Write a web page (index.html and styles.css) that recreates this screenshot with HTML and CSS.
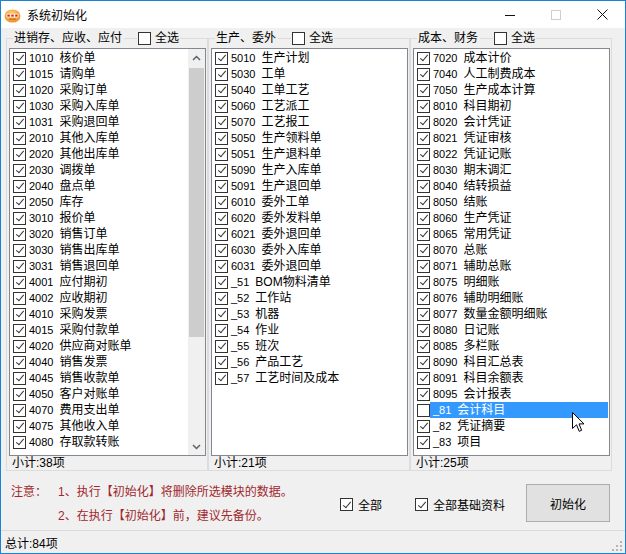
FILE: index.html
```html
<!DOCTYPE html>
<html lang="zh">
<head>
<meta charset="utf-8">
<title>系统初始化</title>
<link rel="stylesheet" href="styles.css">
</head>
<body>
<div class="window">
  <div class="titlebar">
    <svg class="app-icon" width="17" height="14" viewBox="0 0 17 14">
      <defs>
        <radialGradient id="ig" cx="0.45" cy="0.35" r="0.7">
          <stop offset="0" stop-color="#ffd27a"/>
          <stop offset="1" stop-color="#ee8a1c"/>
        </radialGradient>
      </defs>
      <ellipse cx="8.5" cy="7" rx="8" ry="6.6" fill="url(#ig)"/>
      <rect x="2.5" y="4.8" width="12" height="3.6" rx="1" fill="#fff3dc"/>
      <rect x="3.4" y="5.6" width="2.4" height="2" fill="#d2232a"/>
      <rect x="7.3" y="5.6" width="2.4" height="2" fill="#d2232a"/>
      <rect x="11.2" y="5.6" width="2.4" height="2" fill="#d2232a"/>
      <rect x="5" y="9.6" width="7" height="1" fill="#b8601a"/>
    </svg>
    <span class="title">系统初始化</span>
    <div class="caption">
      <span class="cap"><svg width="10" height="10" viewBox="0 0 10 10"><path d="M0 5.5H10" stroke="#111" stroke-width="1"/></svg></span>
      <span class="cap"><svg width="10" height="10" viewBox="0 0 10 10"><rect x="0.5" y="0.5" width="9" height="9" fill="none" stroke="#cfcfcf"/></svg></span>
      <span class="cap"><svg width="11" height="11" viewBox="0 0 11 11"><path d="M0.5 0.5L10.5 10.5M10.5 0.5L0.5 10.5" stroke="#111" stroke-width="1"/></svg></span>
    </div>
  </div>

  <div class="groups">
    <fieldset class="group">
      <legend><span class="legend-inner"><span class="legend-text">进销存、应收、应付</span><span class="legend-line"></span><span class="cb"></span><span class="legend-chk">全选</span></span></legend>
      <div class="list">
        <div class="items">
          <div class="item"><span class="cb on"></span><span class="lbl"><span class="code">1010</span>核价单</span></div>
          <div class="item"><span class="cb on"></span><span class="lbl"><span class="code">1015</span>请购单</span></div>
          <div class="item"><span class="cb on"></span><span class="lbl"><span class="code">1020</span>采购订单</span></div>
          <div class="item"><span class="cb on"></span><span class="lbl"><span class="code">1030</span>采购入库单</span></div>
          <div class="item"><span class="cb on"></span><span class="lbl"><span class="code">1031</span>采购退回单</span></div>
          <div class="item"><span class="cb on"></span><span class="lbl"><span class="code">2010</span>其他入库单</span></div>
          <div class="item"><span class="cb on"></span><span class="lbl"><span class="code">2020</span>其他出库单</span></div>
          <div class="item"><span class="cb on"></span><span class="lbl"><span class="code">2030</span>调拨单</span></div>
          <div class="item"><span class="cb on"></span><span class="lbl"><span class="code">2040</span>盘点单</span></div>
          <div class="item"><span class="cb on"></span><span class="lbl"><span class="code">2050</span>库存</span></div>
          <div class="item"><span class="cb on"></span><span class="lbl"><span class="code">3010</span>报价单</span></div>
          <div class="item"><span class="cb on"></span><span class="lbl"><span class="code">3020</span>销售订单</span></div>
          <div class="item"><span class="cb on"></span><span class="lbl"><span class="code">3030</span>销售出库单</span></div>
          <div class="item"><span class="cb on"></span><span class="lbl"><span class="code">3031</span>销售退回单</span></div>
          <div class="item"><span class="cb on"></span><span class="lbl"><span class="code">4001</span>应付期初</span></div>
          <div class="item"><span class="cb on"></span><span class="lbl"><span class="code">4002</span>应收期初</span></div>
          <div class="item"><span class="cb on"></span><span class="lbl"><span class="code">4010</span>采购发票</span></div>
          <div class="item"><span class="cb on"></span><span class="lbl"><span class="code">4015</span>采购付款单</span></div>
          <div class="item"><span class="cb on"></span><span class="lbl"><span class="code">4020</span>供应商对账单</span></div>
          <div class="item"><span class="cb on"></span><span class="lbl"><span class="code">4040</span>销售发票</span></div>
          <div class="item"><span class="cb on"></span><span class="lbl"><span class="code">4045</span>销售收款单</span></div>
          <div class="item"><span class="cb on"></span><span class="lbl"><span class="code">4050</span>客户对账单</span></div>
          <div class="item"><span class="cb on"></span><span class="lbl"><span class="code">4070</span>费用支出单</span></div>
          <div class="item"><span class="cb on"></span><span class="lbl"><span class="code">4075</span>其他收入单</span></div>
          <div class="item"><span class="cb on"></span><span class="lbl"><span class="code">4080</span>存取款转账</span></div>
        </div>
        <div class="vscroll">
          <div class="arrow"><svg width="9" height="6" viewBox="0 0 9 6"><path d="M1 5L4.5 1.5L8 5" fill="none" stroke="#606060" stroke-width="1.5"/></svg></div>
          <div class="track"><div class="thumb"></div></div>
          <div class="arrow"><svg width="9" height="6" viewBox="0 0 9 6"><path d="M1 1L4.5 4.5L8 1" fill="none" stroke="#606060" stroke-width="1.5"/></svg></div>
        </div>
      </div>
      <div class="subtotal">小计:38项</div>
    </fieldset>

    <fieldset class="group">
      <legend><span class="legend-inner"><span class="legend-text">生产、委外</span><span class="legend-line"></span><span class="cb"></span><span class="legend-chk">全选</span></span></legend>
      <div class="list">
        <div class="items">
          <div class="item"><span class="cb on"></span><span class="lbl"><span class="code">5010</span>生产计划</span></div>
          <div class="item"><span class="cb on"></span><span class="lbl"><span class="code">5030</span>工单</span></div>
          <div class="item"><span class="cb on"></span><span class="lbl"><span class="code">5040</span>工单工艺</span></div>
          <div class="item"><span class="cb on"></span><span class="lbl"><span class="code">5060</span>工艺派工</span></div>
          <div class="item"><span class="cb on"></span><span class="lbl"><span class="code">5070</span>工艺报工</span></div>
          <div class="item"><span class="cb on"></span><span class="lbl"><span class="code">5050</span>生产领料单</span></div>
          <div class="item"><span class="cb on"></span><span class="lbl"><span class="code">5051</span>生产退料单</span></div>
          <div class="item"><span class="cb on"></span><span class="lbl"><span class="code">5090</span>生产入库单</span></div>
          <div class="item"><span class="cb on"></span><span class="lbl"><span class="code">5091</span>生产退回单</span></div>
          <div class="item"><span class="cb on"></span><span class="lbl"><span class="code">6010</span>委外工单</span></div>
          <div class="item"><span class="cb on"></span><span class="lbl"><span class="code">6020</span>委外发料单</span></div>
          <div class="item"><span class="cb on"></span><span class="lbl"><span class="code">6021</span>委外退回单</span></div>
          <div class="item"><span class="cb on"></span><span class="lbl"><span class="code">6030</span>委外入库单</span></div>
          <div class="item"><span class="cb on"></span><span class="lbl"><span class="code">6031</span>委外退回单</span></div>
          <div class="item"><span class="cb on"></span><span class="lbl"><span class="code">_51</span>BOM物料清单</span></div>
          <div class="item"><span class="cb on"></span><span class="lbl"><span class="code">_52</span>工作站</span></div>
          <div class="item"><span class="cb on"></span><span class="lbl"><span class="code">_53</span>机器</span></div>
          <div class="item"><span class="cb on"></span><span class="lbl"><span class="code">_54</span>作业</span></div>
          <div class="item"><span class="cb on"></span><span class="lbl"><span class="code">_55</span>班次</span></div>
          <div class="item"><span class="cb on"></span><span class="lbl"><span class="code">_56</span>产品工艺</span></div>
          <div class="item"><span class="cb on"></span><span class="lbl"><span class="code">_57</span>工艺时间及成本</span></div>
        </div>
      </div>
      <div class="subtotal">小计:21项</div>
    </fieldset>

    <fieldset class="group">
      <legend><span class="legend-inner"><span class="legend-text">成本、财务</span><span class="legend-line"></span><span class="cb"></span><span class="legend-chk">全选</span></span></legend>
      <div class="list">
        <div class="items">
          <div class="item"><span class="cb on"></span><span class="lbl"><span class="code">7020</span>成本计价</span></div>
          <div class="item"><span class="cb on"></span><span class="lbl"><span class="code">7040</span>人工制费成本</span></div>
          <div class="item"><span class="cb on"></span><span class="lbl"><span class="code">7050</span>生产成本计算</span></div>
          <div class="item"><span class="cb on"></span><span class="lbl"><span class="code">8010</span>科目期初</span></div>
          <div class="item"><span class="cb on"></span><span class="lbl"><span class="code">8020</span>会计凭证</span></div>
          <div class="item"><span class="cb on"></span><span class="lbl"><span class="code">8021</span>凭证审核</span></div>
          <div class="item"><span class="cb on"></span><span class="lbl"><span class="code">8022</span>凭证记账</span></div>
          <div class="item"><span class="cb on"></span><span class="lbl"><span class="code">8030</span>期末调汇</span></div>
          <div class="item"><span class="cb on"></span><span class="lbl"><span class="code">8040</span>结转损益</span></div>
          <div class="item"><span class="cb on"></span><span class="lbl"><span class="code">8050</span>结账</span></div>
          <div class="item"><span class="cb on"></span><span class="lbl"><span class="code">8060</span>生产凭证</span></div>
          <div class="item"><span class="cb on"></span><span class="lbl"><span class="code">8065</span>常用凭证</span></div>
          <div class="item"><span class="cb on"></span><span class="lbl"><span class="code">8070</span>总账</span></div>
          <div class="item"><span class="cb on"></span><span class="lbl"><span class="code">8071</span>辅助总账</span></div>
          <div class="item"><span class="cb on"></span><span class="lbl"><span class="code">8075</span>明细账</span></div>
          <div class="item"><span class="cb on"></span><span class="lbl"><span class="code">8076</span>辅助明细账</span></div>
          <div class="item"><span class="cb on"></span><span class="lbl"><span class="code">8077</span>数量金额明细账</span></div>
          <div class="item"><span class="cb on"></span><span class="lbl"><span class="code">8080</span>日记账</span></div>
          <div class="item"><span class="cb on"></span><span class="lbl"><span class="code">8085</span>多栏账</span></div>
          <div class="item"><span class="cb on"></span><span class="lbl"><span class="code">8090</span>科目汇总表</span></div>
          <div class="item"><span class="cb on"></span><span class="lbl"><span class="code">8091</span>科目余额表</span></div>
          <div class="item"><span class="cb on"></span><span class="lbl"><span class="code">8095</span>会计报表</span></div>
          <div class="item"><span class="cb"></span><span class="lbl selected"><span class="code">_81</span>会计科目</span></div>
          <div class="item"><span class="cb on"></span><span class="lbl"><span class="code">_82</span>凭证摘要</span></div>
          <div class="item"><span class="cb on"></span><span class="lbl"><span class="code">_83</span>项目</span></div>
        </div>
      </div>
      <div class="subtotal">小计:25项</div>
    </fieldset>
  </div>

  <div class="bottom">
    <div class="notes">
      <span>注意：</span><span>1、执行【初始化】将删除所选模块的数据。</span>
      <span></span><span>2、在执行【初始化】前，建议先备份。</span>
    </div>
    <div class="options">
      <span class="opt"><span class="cb on"></span>全部</span>
      <span class="opt"><span class="cb on"></span>全部基础资料</span>
      <span class="btn">初始化</span>
    </div>
  </div>

  <div class="status">
    <span>总计:84项</span>
    <svg class="grip" width="11" height="11" viewBox="0 0 11 11">
      <rect x="8" y="0" width="2" height="2" fill="#b5b5b5"/>
      <rect x="4" y="4" width="2" height="2" fill="#b5b5b5"/>
      <rect x="8" y="4" width="2" height="2" fill="#b5b5b5"/>
      <rect x="0" y="8" width="2" height="2" fill="#b5b5b5"/>
      <rect x="4" y="8" width="2" height="2" fill="#b5b5b5"/>
      <rect x="8" y="8" width="2" height="2" fill="#b5b5b5"/>
    </svg>
  </div>

  <svg class="cursor" width="13" height="21" viewBox="0 0 13 21">
    <path d="M0.5 0.5V16.5L4.5 12.8L7.2 19.3L9.6 18.3L7 11.9H12Z" fill="#fff" stroke="#000" stroke-width="1" stroke-linejoin="round"/>
  </svg>
</div>
</body>
</html>
```

FILE: styles.css
```css
body {
  margin: 0;
  background: #fff;
  font-family: "Liberation Sans", "Noto Sans CJK SC", sans-serif;
  font-size: 12px;
  color: #000;
}

.window {
  width: 626px;
  height: 554px;
  box-sizing: border-box;
  border: 1px solid #1883d7;
  background: #f0f0f0;
  display: flex;
  flex-direction: column;
  position: relative;
  overflow: hidden;
}

/* title bar */
.titlebar {
  height: 27px;
  flex: none;
  background: #fff;
  display: flex;
  align-items: center;
}
.app-icon {
  margin-left: 3px;
  margin-right: 6px;
  margin-top: 2px;
  flex: none;
}
.title {
  line-height: 16px;
  margin-top: 2px;
}
.caption {
  margin-left: auto;
  align-self: stretch;
  display: flex;
}
.cap {
  width: 46px;
  display: flex;
  align-items: center;
  justify-content: center;
}

/* groups */
.groups {
  height: 443px;
  flex: none;
  box-sizing: border-box;
  padding: 2px 0 0 5px;
  display: flex;
  align-items: flex-start;
}
.group {
  width: 202px;
  box-sizing: border-box;
  margin: 0;
  padding: 0 1px 0 2px;
  border: 1px solid #dcdcdc;
  min-width: 0;
}
.group legend {
  margin-left: 4px;
  padding: 0 1px;
  height: 16px;
  line-height: 16px;
}
.legend-inner {
  display: flex;
  align-items: center;
  height: 16px;
  white-space: nowrap;
}
.legend-line {
  width: 13px;
  height: 1px;
  background: #dcdcdc;
  margin: 1px 1px 0 2px;
  flex: none;
}
.legend-chk {
  margin-left: 4px;
}

.cb {
  width: 13px;
  height: 13px;
  box-sizing: border-box;
  border: 1px solid #333;
  background: #fff;
  position: relative;
  flex: none;
  display: inline-block;
}
.cb.on::after {
  content: "";
  position: absolute;
  left: 3.5px;
  top: 0.5px;
  width: 3px;
  height: 7px;
  border: solid #333;
  border-width: 0 1.2px 1.2px 0;
  transform: rotate(40deg);
}

.list {
  margin-top: 2px;
  height: 408px;
  box-sizing: border-box;
  border: 1px solid #828790;
  background: #fff;
  display: flex;
  overflow: hidden;
}
.items {
  flex: 1;
  min-width: 0;
  padding-top: 1px;
}
.item {
  height: 16px;
  display: flex;
  align-items: center;
  padding-left: 3px;
}
.lbl {
  flex: 1;
  margin-right: 1px;
  padding-left: 3px;
  line-height: 16px;
  height: 16px;
  white-space: nowrap;
}
.lbl.selected {
  background: #3399ff;
  color: #fff;
}
.code {
  font-size: 11px;
  margin-right: 6px;
}

.vscroll {
  width: 17px;
  flex: none;
  display: flex;
  flex-direction: column;
  background: #f0f0f0;
}
.arrow {
  height: 17px;
  display: flex;
  align-items: center;
  justify-content: center;
}
.track {
  flex: 1;
  padding: 2px 1px 0;
}
.thumb {
  height: 269px;
  background: #cdcdcd;
}

.subtotal {
  line-height: 14px;
  padding-left: 3px;
}

/* bottom area */
.bottom {
  height: 59px;
  flex: none;
  display: flex;
}
.notes {
  width: 339px;
  box-sizing: border-box;
  padding: 7px 0 0 10px;
  color: #a0282d;
  display: grid;
  grid-template-columns: 47px auto;
  grid-auto-rows: 24px;
  align-items: center;
  align-content: start;
  white-space: nowrap;
}
.options {
  display: flex;
  align-items: center;
  align-self: flex-start;
  margin-top: 13px;
  height: 38px;
}
.opt {
  display: flex;
  align-items: center;
  gap: 5px;
  margin-top: 3px;
}
.opt + .opt {
  margin-left: 33px;
}
.btn {
  margin-left: 21px;
  width: 84px;
  height: 38px;
  box-sizing: border-box;
  background: #e1e1e1;
  border: 1px solid #adadad;
  display: flex;
  align-items: center;
  justify-content: center;
}

/* status bar */
.status {
  height: 23px;
  flex: none;
  box-sizing: border-box;
  border-top: 1px solid #dadada;
  padding-left: 4px;
  display: flex;
  align-items: center;
}
.grip {
  margin-left: auto;
  align-self: flex-end;
  margin-right: 2px;
  margin-bottom: 1px;
}

.cursor {
  position: absolute;
  left: 571px;
  top: 411px;
}
```
